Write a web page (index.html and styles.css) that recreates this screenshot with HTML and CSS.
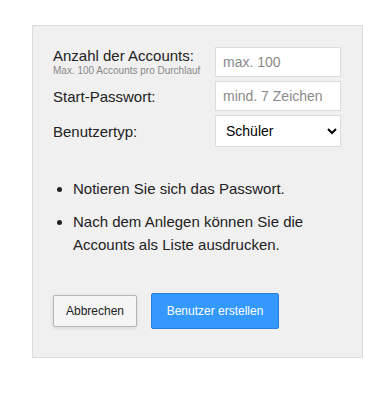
FILE: index.html
```html
<!DOCTYPE html>
<html lang="de">
<head>
    <meta charset="UTF-8">
    <meta name="viewport" content="width=device-width, initial-scale=1.0">
    <title>Benutzer anlegen</title>
    <link rel="stylesheet" href="styles.css">
</head>
<body>
    <div class="create-panel">
        <form class="create-form">
            <div class="form-rows">
                <div class="field-label">
                    <label for="count">Anzahl der Accounts:</label>
                    <small class="hint">Max. 100 Accounts pro Durchlauf</small>
                </div>
                <input type="text" id="count" class="field-input" placeholder="max. 100">

                <label for="password" class="field-label middle">Start-Passwort:</label>
                <input type="text" id="password" class="field-input" placeholder="mind. 7 Zeichen">

                <label for="usertype" class="field-label middle">Benutzertyp:</label>
                <select id="usertype" class="field-select">
                    <option value="student" selected>Schüler</option>
                    <option value="teacher">Lehrer</option>
                </select>
            </div>

            <ul class="notes">
                <li>Notieren Sie sich das Passwort.</li>
                <li>Nach dem Anlegen können Sie die Accounts als Liste ausdrucken.</li>
            </ul>

            <div class="actions">
                <button type="button" class="btn btn-cancel">Abbrechen</button>
                <button type="submit" class="btn btn-primary">Benutzer erstellen</button>
            </div>
        </form>
    </div>
</body>
</html>
```

FILE: styles.css
```css
* {
    margin: 0;
    padding: 0;
    box-sizing: border-box;
    font-family: 'Liberation Sans', Arial, sans-serif;
}

body {
    background: #fff;
    padding: 25px 0 0 32px;
    color: #222;
}

.create-panel {
    width: 331px;
    background: #f0f0f0;
    border: 1px solid #dcdcdc;
    padding: 21px 21px 28px 20px;
}

.form-rows {
    display: grid;
    grid-template-columns: 1fr 126px;
    row-gap: 4px;
}

.field-label {
    font-size: 15px;
    line-height: 17px;
    color: #222;
}

.field-label label {
    display: block;
}

.field-label.middle {
    align-self: center;
}

.hint {
    display: block;
    font-size: 10px;
    line-height: 13px;
    color: #888;
}

.field-input {
    height: 30px;
    border: 1px solid #dcdcdc;
    background: #fff;
    padding: 0 7px;
    font-size: 14px;
    color: #222;
    outline: none;
}

.field-input::placeholder {
    color: #8a8a8a;
}

.field-select {
    height: 32px;
    border: 1px solid #dcdcdc;
    background: #fff;
    padding: 0 6px;
    font-size: 14px;
    color: #000;
}

.notes {
    list-style: disc;
    padding-left: 20px;
    margin-top: 31px;
    width: 260px;
    font-size: 15px;
    line-height: 22.5px;
}

.notes li + li {
    margin-top: 10.5px;
}

.actions {
    display: flex;
    align-items: center;
    gap: 14px;
    margin-top: 37px;
}

.btn {
    font-size: 12px;
    cursor: pointer;
    border-radius: 2px;
}

.btn-cancel {
    width: 84px;
    height: 32px;
    background: #f5f5f5;
    border: 1px solid #b4b4b4;
    color: #222;
    box-shadow: 0 1px 4px rgba(0, 0, 0, 0.12);
}

.btn-primary {
    width: 128px;
    height: 36px;
    background: #3399ff;
    border: 1px solid #2a80d8;
    color: #fff;
}
```
